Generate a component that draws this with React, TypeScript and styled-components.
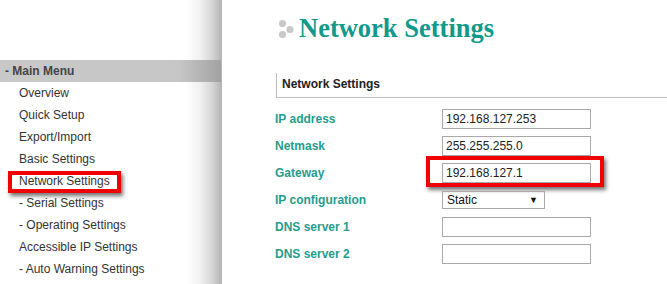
import { Fragment } from "react";
import styled, { createGlobalStyle } from "styled-components";

const GlobalStyle = createGlobalStyle`
  html, body {
    margin: 0;
    padding: 0;
    background: #fff;
    font-family: "Liberation Sans", Arial, sans-serif;
  }
`;

const Page = styled.div`
  display: flex;
  width: 667px;
  height: 284px;
  overflow: hidden;
`;

const Sidebar = styled.div`
  width: 222px;
  flex-shrink: 0;
  padding-top: 60px;
  background: linear-gradient(to right, #fff 0, #fff 185px, #f1f1f1 200px, #d6d6d6 212px, #b3b3b3 222px);
`;

const MenuHeader = styled.div`
  height: 22px;
  line-height: 22px;
  padding-left: 5px;
  font-size: 12px;
  font-weight: bold;
  color: #444;
  background: linear-gradient(to right, #c8c8c8 0, #c6c6c6 180px, #a2a2a2 221px, transparent 221px);
`;

const MenuItem = styled.div`
  position: relative;
  height: 22px;
  line-height: 22px;
  padding-left: 19px;
  font-size: 12px;
  color: #333;
`;

const Highlight = styled.span<{ $top: number; $left: number; $width: number; $height: number }>`
  position: absolute;
  top: ${(p) => p.$top}px;
  left: ${(p) => p.$left}px;
  width: ${(p) => p.$width}px;
  height: ${(p) => p.$height}px;
  box-sizing: border-box;
  border: 4px solid #f00000;
  box-shadow: 2px 3px 4px rgba(0, 0, 0, 0.55);
  pointer-events: none;
`;

const Main = styled.div`
  flex: 1;
  padding-left: 53px;
`;

const Title = styled.h1`
  display: flex;
  align-items: center;
  gap: 3px;
  margin: 15px 0 0 2px;
  height: 27px;
  line-height: 27px;
  font-family: "Liberation Serif", "Times New Roman", serif;
  font-size: 26.5px;
  font-weight: bold;
  color: #11998a;
`;

const Dots = styled.svg`
  width: 18px;
  height: 20px;
  flex-shrink: 0;
  margin-left: 1px;
`;

const SectionHeader = styled.div`
  margin-top: 31px;
  margin-left: 1px;
  height: 24px;
  line-height: 22px;
  padding-left: 5px;
  font-size: 12px;
  font-weight: bold;
  color: #222;
  border-left: 1px solid #bdbdbd;
  border-bottom: 1px solid #bdbdbd;
`;

const Form = styled.div`
  margin-top: 7px;
  display: grid;
  grid-template-columns: 167px 1fr;
  grid-auto-rows: 27px;
  align-items: center;
`;

const Label = styled.div`
  font-size: 12px;
  font-weight: bold;
  color: #1f9d8d;
`;

const Field = styled.div`
  position: relative;
  display: flex;
  align-items: center;
`;

const Input = styled.div`
  box-sizing: border-box;
  width: 149px;
  height: 20px;
  line-height: 18px;
  padding-left: 3px;
  border: 1px solid #a9a9a9;
  font-size: 12px;
  color: #222;
`;

const Select = styled.div`
  box-sizing: border-box;
  width: 103px;
  height: 18px;
  line-height: 16px;
  padding: 0 6px 0 4px;
  border: 1px solid #a9a9a9;
  font-size: 12px;
  color: #111;
  display: flex;
  justify-content: space-between;
`;

const Arrow = styled.span`
  font-size: 9px;
`;

const menu = [
  "Overview",
  "Quick Setup",
  "Export/Import",
  "Basic Settings",
  "Network Settings",
  "- Serial Settings",
  "- Operating Settings",
  "Accessible IP Settings",
  "- Auto Warning Settings",
];

const fields = [
  { label: "IP address", value: "192.168.127.253" },
  { label: "Netmask", value: "255.255.255.0" },
  { label: "Gateway", value: "192.168.127.1", mark: true },
  { label: "IP configuration", select: "Static" },
  { label: "DNS server 1", value: "" },
  { label: "DNS server 2", value: "" },
];

export default function App() {
  return (
    <>
      <GlobalStyle />
      <Page>
        <Sidebar>
          <MenuHeader>- Main Menu</MenuHeader>
          {menu.map((m) => (
            <MenuItem key={m}>
              {m}
              {m === "Network Settings" && (
                <Highlight $top={1} $left={8} $width={113} $height={22} />
              )}
            </MenuItem>
          ))}
        </Sidebar>
        <Main>
          <Title>
            <Dots viewBox="0 0 18 20">
              <circle cx="4.5" cy="4.5" r="3.6" fill="#c9c9c9" />
              <circle cx="12" cy="10.5" r="3.6" fill="#c9c9c9" />
              <circle cx="4.5" cy="15.5" r="3.6" fill="#c9c9c9" />
            </Dots>
            Network Settings
          </Title>
          <SectionHeader>Network Settings</SectionHeader>
          <Form>
            {fields.map((f) => (
              <Fragment key={f.label}>
                <Label>{f.label}</Label>
                <Field>
                  {f.select ? (
                    <Select>
                      {f.select}
                      <Arrow>▼</Arrow>
                    </Select>
                  ) : (
                    <Input>{f.value}</Input>
                  )}
                  {f.mark && <Highlight $top={-7} $left={-16} $width={178} $height={31} />}
                </Field>
              </Fragment>
            ))}
          </Form>
        </Main>
      </Page>
    </>
  );
}
